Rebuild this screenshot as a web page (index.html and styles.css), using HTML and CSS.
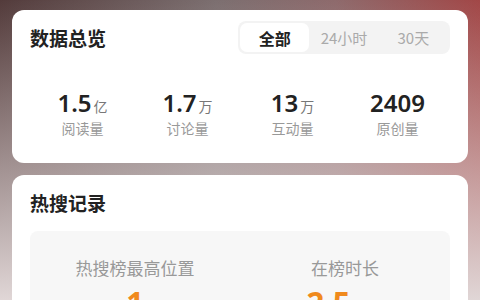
FILE: index.html
```html
<!DOCTYPE html>
<html lang="zh-CN">
<head>
    <meta charset="UTF-8">
    <meta name="viewport" content="width=device-width, initial-scale=1.0">
    <title>数据总览</title>
    <link rel="stylesheet" href="styles.css">
</head>
<body>
    <div class="page">
        <div class="card overview">
            <div class="card-head">
                <span class="card-title">数据总览</span>
                <div class="tabs">
                    <span class="tab active">全部</span>
                    <span class="tab">24小时</span>
                    <span class="tab">30天</span>
                </div>
            </div>
            <div class="stats">
                <div class="stat">
                    <div class="stat-num">1.5<span class="unit">亿</span></div>
                    <div class="stat-label">阅读量</div>
                </div>
                <div class="stat">
                    <div class="stat-num">1.7<span class="unit">万</span></div>
                    <div class="stat-label">讨论量</div>
                </div>
                <div class="stat">
                    <div class="stat-num">13<span class="unit">万</span></div>
                    <div class="stat-label">互动量</div>
                </div>
                <div class="stat">
                    <div class="stat-num">2409</div>
                    <div class="stat-label">原创量</div>
                </div>
            </div>
        </div>

        <div class="card hot">
            <div class="card-title">热搜记录</div>
            <div class="hot-box">
                <div class="hot-item">
                    <div class="hot-label">热搜榜最高位置</div>
                    <div class="hot-num">1</div>
                </div>
                <div class="hot-item">
                    <div class="hot-label">在榜时长</div>
                    <div class="hot-num">2.5<span class="hot-unit">小时</span></div>
                </div>
            </div>
        </div>
    </div>
</body>
</html>
```

FILE: styles.css
```css
html, body {
    margin: 0;
    height: 300px;
    overflow: hidden;
}

body {
    font-family: "Noto Sans", "Noto Sans CJK SC", sans-serif;
    background:
        linear-gradient(to bottom, rgba(224, 214, 214, 0) 0%, rgba(224, 214, 214, 0.55) 55%, rgba(224, 214, 214, 1) 100%),
        linear-gradient(to right, #533b3b 0%, #7c6f70 45%, #8e6a6c 70%, #a24747 100%);
}

.page {
    display: flex;
    flex-direction: column;
    gap: 12px;
    padding: 10px 12px 0;
}

.card {
    background: #fff;
    border-radius: 12px;
}

.overview {
    padding: 11px 18px 25px;
}

.card-head {
    display: flex;
    align-items: center;
    justify-content: space-between;
    height: 33px;
}

.card-title {
    font-family: "Noto Sans CJK SC", sans-serif;
    font-size: 19px;
    font-weight: 700;
    color: #222;
    line-height: 24px;
    height: 24px;
}

.tabs {
    display: flex;
    width: 212px;
    height: 33px;
    padding: 2px;
    box-sizing: border-box;
    background: #f3f3f3;
    border-radius: 8px;
}

.tab {
    flex: 1;
    display: flex;
    align-items: center;
    justify-content: center;
    font-family: "Noto Sans CJK SC", sans-serif;
    font-size: 15px;
    color: #aaa;
    border-radius: 7px;
}

.tab.active {
    background: #fff;
    color: #222;
    font-weight: 700;
    font-size: 16px;
}

.stats {
    display: grid;
    grid-template-columns: repeat(4, 1fr);
    margin-top: 35px;
}

.stat {
    text-align: center;
}

.stat-num {
    font-size: 24px;
    font-weight: 600;
    color: #222;
    line-height: 28px;
    height: 28px;
}

.unit {
    font-family: "Noto Sans CJK SC", sans-serif;
    font-size: 14px;
    font-weight: 400;
    color: #777;
    margin-left: 2px;
    line-height: 1;
}

.stat-label {
    font-family: "Noto Sans CJK SC", sans-serif;
    font-size: 14px;
    color: #999;
    line-height: 20px;
    height: 20px;
    margin-top: 1px;
}

.hot {
    padding: 16px 18px 30px;
}

.hot-box {
    display: grid;
    grid-template-columns: 1fr 1fr;
    margin-top: 16px;
    padding: 25px 0 20px;
    background: #f7f7f7;
    border-radius: 8px;
}

.hot-item {
    text-align: center;
}

.hot-label {
    font-family: "Noto Sans CJK SC", sans-serif;
    font-size: 17px;
    color: #999;
    line-height: 24px;
    height: 24px;
}

.hot-num {
    margin-top: 2px;
    font-size: 31px;
    font-weight: 700;
    color: #f08a1d;
    line-height: 40px;
    height: 40px;
}

.hot-unit {
    font-family: "Noto Sans CJK SC", sans-serif;
    font-size: 15px;
    font-weight: 400;
    color: #999;
    margin-left: 3px;
    line-height: 1;
}
```
